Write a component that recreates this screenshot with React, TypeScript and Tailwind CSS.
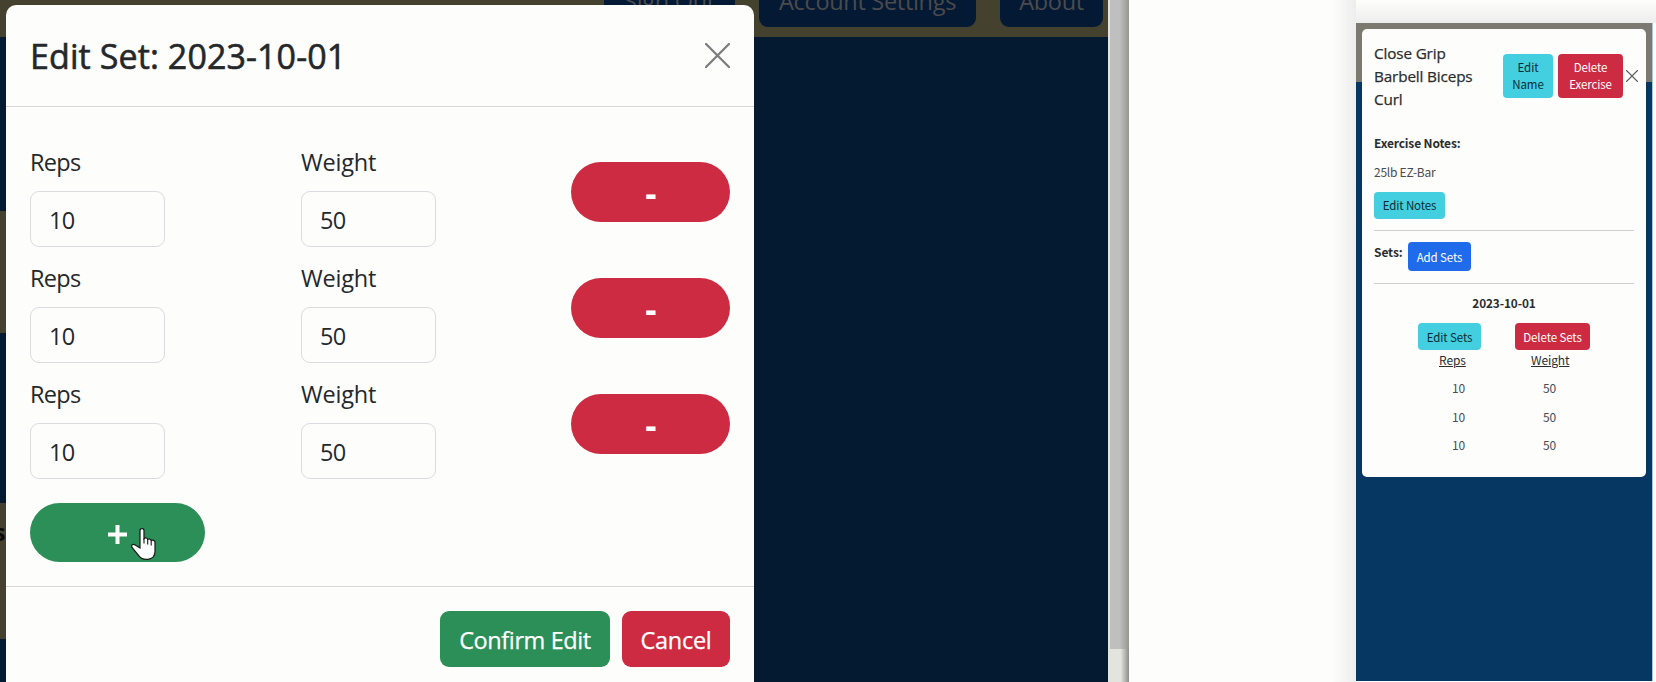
import React from "react";

const sets = [
  { reps: "10", weight: "50" },
  { reps: "10", weight: "50" },
  { reps: "10", weight: "50" },
];

function Cross({ className }: { className: string }) {
  return (
    <svg className={className} viewBox="0 0 24 24" fill="none" stroke="currentColor" strokeLinecap="round">
      <path d="M1 1 23 23M23 1 1 23" strokeWidth="2.2" />
    </svg>
  );
}

function Field({ label, value }: { label: string; value: string }) {
  return (
    <label className="flex w-[271px] flex-col">
      <span className={`h-9 text-[23.5px] leading-[35px] ${label === "Reps" ? "tracking-[-0.7px]" : "tracking-[-0.2px]"}`}>{label}</span>
      <span className="mt-2.5 flex h-14 w-[135px] items-center rounded-[9px] border border-[#dcdce0] pt-1 pl-[18px] text-[23.5px] tracking-[-0.6px]">
        {value}
      </span>
    </label>
  );
}

function SetRow({ reps, weight }: { reps: string; weight: string }) {
  return (
    <div className="flex h-[102px]">
      <Field label="Reps" value={reps} />
      <Field label="Weight" value={weight} />
      <button className="mt-[17px] -ml-px flex h-[60px] w-[159px] items-center justify-center rounded-full bg-[#cd2b42] pl-px text-[35px] leading-none font-bold text-white">
        -
      </button>
    </div>
  );
}

function EditSetModal() {
  return (
    <section className="relative mt-[5px] flex h-[700px] w-[748px] shrink-0 flex-col rounded-t-[10px] bg-[#fdfdfc] text-[#24282b]">
      <header className="flex h-[102px] shrink-0 items-center justify-between border-b border-[#d8d8d6] pr-6 pl-6">
        <h1 className="pt-px text-[34px] font-medium tracking-[0.1px] [-webkit-text-stroke:0.6px_#24282b]">Edit Set: 2023-10-01</h1>
        <Cross className="h-[25px] w-[25px] text-[#7d7d80]" />
      </header>
      <div className="flex h-[480px] shrink-0 flex-col border-b border-[#d8d8d6] px-6 pt-[38px]">
        <div className="flex flex-col gap-3.5">
          {sets.map((set, i) => (
            <SetRow key={i} {...set} />
          ))}
        </div>
        <button className="mt-6 flex h-[59px] w-[175px] items-center justify-center rounded-full bg-[#2c8f57] pt-1">
          <svg className="h-[19px] w-[19px]" viewBox="0 0 19 19" stroke="#fff" strokeWidth="4">
            <path d="M0 9.5H19M9.5 0V19" />
          </svg>
        </button>
      </div>
      <footer className="flex justify-end gap-3 px-6 pt-6 text-[23.5px] text-white [-webkit-text-stroke:0.25px_#fff]">
        <button className="h-14 w-[170px] rounded-[9px] bg-[#2c8f57] pt-1 tracking-[-0.4px] whitespace-nowrap">Confirm Edit</button>
        <button className="h-14 w-[108px] rounded-[9px] bg-[#cd2b42] pt-1 tracking-[-0.3px]">Cancel</button>
      </footer>
      <svg className="absolute top-[522px] left-[125px] h-[34px] w-[26px]" viewBox="0 0 26 34">
        <path
          d="M9 3.4c0-2.5 4-2.5 4 0v8.2c1-1.2 3.4-.8 3.7.9 1-.9 3.2-.5 3.5 1.1 1.3-.9 3.8-.3 3.8 1.7v9.2c0 4.5-3 7.3-7.2 7.8-4.5.5-7.5-1.2-9.7-4.5L1 20.5c-1.1-2 .6-4 2.8-2.8L9 21z"
          fill="#fff"
          stroke="#171717"
          strokeWidth="1.2"
        />
        <path d="M13 11.5v5M16.7 12.5v5M20.2 13.5v5" stroke="#171717" strokeWidth="1.1" />
      </svg>
    </section>
  );
}

function NavButton({ label, className }: { label: string; className: string }) {
  return (
    <div className={`flex h-14 shrink-0 items-center justify-center rounded-[9px] bg-[#041933] pt-1.5 text-[23.5px] tracking-[-0.3px] whitespace-nowrap text-[#4b4b4d] ${className}`}>
      {label}
    </div>
  );
}

function Backdrop() {
  return (
    <>
      <div className="absolute inset-y-0 left-0 flex w-[700px] flex-col">
        <div className="h-[37px]" />
        <div className="h-[174px]" />
        <div className="h-[122px] bg-[#45412f]" />
        <div className="h-[170px]" />
        <div className="h-[136px] bg-[#45412f] pt-[11px]">
          <div className="-ml-[6px] text-[23px] leading-9 font-bold text-[#0a0a0a]">s</div>
        </div>
      </div>
      <div className="absolute top-0 left-0 flex h-[37px] w-[1108px] items-end overflow-hidden bg-[#45412f] pb-[10px]">
        <NavButton label="Sign Out" className="ml-[604px] w-[131px]" />
        <NavButton label="Account Settings" className="ml-6 w-[217px]" />
        <NavButton label="About" className="ml-6 w-[103px]" />
      </div>
    </>
  );
}

function PhoneRow({ reps, weight }: { reps: string; weight: string }) {
  return (
    <div className="flex h-[28.5px] items-center">
      <span className="ml-[78px] w-[13px]">{reps}</span>
      <span className="ml-[78px] w-[13px]">{weight}</span>
    </div>
  );
}

function Phone() {
  return (
    <aside className="flex h-[658px] w-[297px] shrink-0 flex-col border-r border-[#a8c6dc] bg-[#063763] font-['Noto_Sans_CJK_SC','Noto_Sans',sans-serif]">
      <div className="h-[59px] shrink-0 bg-[#7c7970] px-1.5 pt-1.5">
        <div className="flex h-[448px] w-[284px] flex-col rounded-[5px] bg-[#fdfdfc] px-3 text-[12px] tracking-[-0.1px] text-[#2a2d30]">
          <header className="flex h-[94px] shrink-0 items-center">
            <h2 className="w-[129px] shrink-0 font-['Open_Sans',sans-serif] text-[15.3px] leading-[23px] tracking-[-0.15px] [-webkit-text-stroke:0.25px_#2a2d30]">
              Close Grip
              <br />
              Barbell Biceps
              <br />
              Curl
            </h2>
            <button className="h-[44px] w-[50px] shrink-0 rounded-[4px] bg-[#43cfe0] text-[11.5px] leading-[17px] text-[#0c2c33]">Edit Name</button>
            <button className="ml-[5px] h-[44px] w-[65px] shrink-0 rounded-[4px] bg-[#cd2b42] text-[11.5px] leading-[17px] text-white">Delete Exercise</button>
            <Cross className="ml-[3px] h-3 w-3 shrink-0 text-[#5c5d60]" />
          </header>
          <h3 className="mt-[10px] leading-5 font-bold tracking-[-0.15px]">Exercise Notes:</h3>
          <p className="mt-[9px] leading-5 tracking-[-0.25px] text-[#494c50]">25lb EZ-Bar</p>
          <button className="mt-[10px] h-[27px] w-[71px] shrink-0 rounded-[4px] bg-[#43cfe0] pt-px text-[11.5px] tracking-[-0.15px] text-[#0c2c33]">Edit Notes</button>
          <div className="mt-[11px] border-t border-[#d0d0d2]" />
          <div className="flex pt-[11px]">
            <h3 className="w-[34px] leading-5 font-bold">Sets:</h3>
            <button className="h-[29px] w-[63px] rounded-[4px] bg-[#1f6bea] pt-[3px] text-[11.5px] text-white">Add Sets</button>
          </div>
          <div className="mt-[12px] border-t border-[#d0d0d2]" />
          <h3 className="mt-[9px] text-center text-[11.8px] leading-5 font-bold">2023-10-01</h3>
          <div className="mt-[10px] flex pl-[44px]">
            <button className="h-[27px] w-[63px] rounded-[4px] bg-[#43cfe0] pt-0.5 text-[11.5px] text-[#0c2c33]">Edit Sets</button>
            <button className="ml-[34px] h-[27px] w-[75px] rounded-[4px] bg-[#cd2b42] pt-0.5 text-[11.5px] text-white">Delete Sets</button>
          </div>
          <div className="flex h-5 items-center underline">
            <span className="ml-[65px] w-[92px]">Reps</span>
            <span>Weight</span>
          </div>
          <div className="mt-[4px] text-[#494c50]">
            {sets.map((set, i) => (
              <PhoneRow key={i} {...set} />
            ))}
          </div>
        </div>
      </div>
    </aside>
  );
}

export default function App() {
  return (
    <main className="flex h-[682px] w-[1656px] overflow-hidden bg-[#fdfdfc] font-['Open_Sans','Noto_Sans',sans-serif]">
      <div className="relative h-full w-[1108px] shrink-0 overflow-hidden bg-[#041a31] pl-1.5">
        <Backdrop />
        <EditSetModal />
      </div>
      <div className="flex w-[21px] shrink-0 flex-col bg-linear-to-r from-[#e4e4df] from-60% to-[#8d8d8a] pl-0.5">
        <div className="h-[649px] bg-linear-to-r from-[#bfbfc0] from-50% to-[#96968f]" />
      </div>
      <div className="w-[203px] shrink-0" />
      <div className="w-6 shrink-0 bg-linear-to-r from-[#fdfdfc] to-[#ededed]" />
      <div className="flex flex-1 flex-col">
        <div className="h-[23px] shrink-0 bg-linear-to-b from-[#fdfdfc] to-[#ededed]" />
        <Phone />
      </div>
    </main>
  );
}
